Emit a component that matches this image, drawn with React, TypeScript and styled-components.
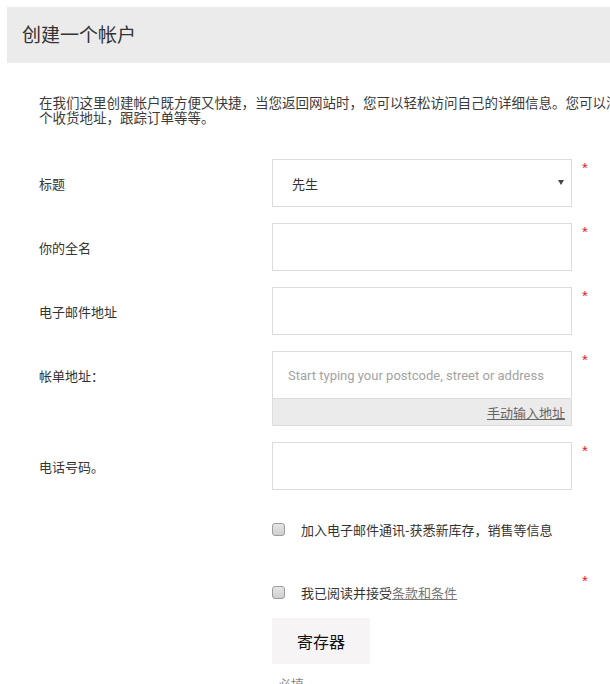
import React from 'react';
import styled, { createGlobalStyle } from 'styled-components';

const GlobalStyle = createGlobalStyle`
  html, body {
    margin: 0;
    padding: 0;
    background: #fff;
    overflow-x: hidden;
  }
  body {
    font-family: "Noto Sans CJK SC", "Noto Sans", sans-serif;
    color: #333;
  }
`;

const Page = styled.div`
  width: 680px;
  padding: 7px 0 0 7px;
`;

const Header = styled.div`
  display: flex;
  align-items: center;
  height: 56px;
  padding-left: 15px;
  background: #ebebeb;
`;

const Title = styled.h1`
  margin: 0 0 3px;
  font-size: 19px;
  font-weight: normal;
  line-height: 1;
  color: #333;
`;

const Intro = styled.p`
  width: 610px;
  margin: 32px 0 0 32px;
  font-size: 13.5px;
  line-height: 15px;
  color: #3a3a3a;
`;

const Form = styled.form`
  margin-top: 34px;
  padding-left: 32px;
`;

const FieldRow = styled.div<{ gap?: number }>`
  display: grid;
  grid-template-columns: 233px 300px auto;
  margin-bottom: ${p => (p.gap ?? 16)}px;
`;

const Label = styled.label`
  display: flex;
  align-items: center;
  align-self: start;
  height: 48px;
  font-size: 13px;
  color: #333;
`;

const Required = styled.span`
  align-self: start;
  margin: 1px 0 0 10px;
  font-family: "Liberation Sans", Arial, sans-serif;
  font-size: 15px;
  line-height: 1;
  color: #f0132c;
`;

const TextInput = styled.input`
  box-sizing: border-box;
  width: 300px;
  height: 48px;
  padding: 0 15px;
  border: 1px solid #dcdcdc;
  border-radius: 0;
  outline: none;
  font-family: Roboto, "Noto Sans CJK SC", sans-serif;
  font-size: 13px;
  color: #333;
  background: #fff;

  &::placeholder {
    color: #a3a3a3;
  }
`;

const SelectWrap = styled.div`
  position: relative;
  width: 300px;
  height: 48px;
`;

const Select = styled.select`
  box-sizing: border-box;
  width: 100%;
  height: 100%;
  padding: 0 19px;
  border: 1px solid #dcdcdc;
  border-radius: 0;
  appearance: none;
  background: #fff;
  font-family: "Noto Sans CJK SC", sans-serif;
  font-size: 13px;
  color: #333;
  outline: none;
`;

const Caret = styled.span`
  position: absolute;
  top: 21px;
  right: 8px;
  width: 0;
  height: 0;
  border-left: 3px solid transparent;
  border-right: 3px solid transparent;
  border-top: 5px solid #444;
  pointer-events: none;
`;

const AddressBox = styled.div`
  display: flex;
  flex-direction: column;
  width: 300px;
`;

const AddressBar = styled.div`
  box-sizing: border-box;
  display: flex;
  align-items: center;
  justify-content: flex-end;
  height: 27px;
  padding-right: 6px;
  border: 1px solid #dcdcdc;
  border-top: none;
  background: #ebebeb;
`;

const TextLink = styled.a<{ tone?: string }>`
  font-size: 13px;
  color: ${p => p.tone ?? '#666'};
  text-decoration: underline;
  cursor: pointer;
`;

const CheckLine = styled.label<{ offset?: number }>`
  grid-column: 2;
  display: flex;
  align-items: center;
  gap: 16px;
  height: 16px;
  margin-top: ${p => p.offset ?? 0}px;
  font-size: 13px;
  color: #333;
  white-space: nowrap;
`;

const Check = styled.input`
  appearance: none;
  box-sizing: border-box;
  width: 13px;
  height: 13px;
  margin: 0;
  border: 1px solid #9c9c9c;
  border-radius: 3px;
  background: linear-gradient(#e6e6e6, #cfcfcf);
`;

const Actions = styled.div`
  padding-left: 233px;
`;

const SubmitButton = styled.button`
  width: 98px;
  height: 46px;
  border: none;
  background: #f6f4f4;
  font-family: "Noto Sans CJK SC", sans-serif;
  font-size: 16px;
  color: #111;
  cursor: pointer;
`;

const Note = styled.div`
  margin-top: 12px;
  padding-left: 6px;
  font-size: 13px;
  line-height: 15px;
  color: #888;
`;

const App: React.FC = () => (
  <>
    <GlobalStyle />
    <Page>
      <Header>
        <Title>创建一个帐户</Title>
      </Header>
      <Intro>
        在我们这里创建帐户既方便又快捷，当您返回网站时，您可以轻松访问自己的详细信息。您可以添加多个收货地址，跟踪订单等等。
      </Intro>
      <Form onSubmit={e => e.preventDefault()}>
        <FieldRow>
          <Label>标题</Label>
          <SelectWrap>
            <Select defaultValue="mr">
              <option value="mr">先生</option>
              <option value="mrs">女士</option>
            </Select>
            <Caret />
          </SelectWrap>
          <Required>*</Required>
        </FieldRow>
        <FieldRow>
          <Label>你的全名</Label>
          <TextInput type="text" />
          <Required>*</Required>
        </FieldRow>
        <FieldRow>
          <Label>电子邮件地址</Label>
          <TextInput type="email" />
          <Required>*</Required>
        </FieldRow>
        <FieldRow>
          <Label>帐单地址：</Label>
          <AddressBox>
            <TextInput type="text" placeholder="Start typing your postcode, street or address" />
            <AddressBar>
              <TextLink>手动输入地址</TextLink>
            </AddressBar>
          </AddressBox>
          <Required>*</Required>
        </FieldRow>
        <FieldRow gap={27}>
          <Label>电话号码。</Label>
          <TextInput type="tel" />
          <Required>*</Required>
        </FieldRow>
        <FieldRow gap={0}>
          <CheckLine offset={4}>
            <Check type="checkbox" />
            加入电子邮件通讯-获悉新库存，销售等信息
          </CheckLine>
        </FieldRow>
        <FieldRow gap={18} style={{ marginTop: 35 }}>
          <CheckLine offset={12}>
            <Check type="checkbox" />
            <span>
              我已阅读并接受<TextLink tone="#777">条款和条件</TextLink>
            </span>
          </CheckLine>
          <Required>*</Required>
        </FieldRow>
        <Actions>
          <SubmitButton type="submit">寄存器</SubmitButton>
          <Note>必填</Note>
        </Actions>
      </Form>
    </Page>
  </>
);

export default App;
